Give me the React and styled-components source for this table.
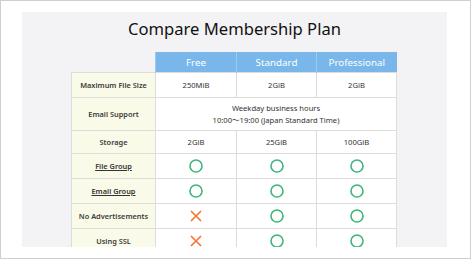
import React from 'react';
import styled, { createGlobalStyle } from 'styled-components';

const GlobalStyle = createGlobalStyle`
  body {
    margin: 0;
    background: #fff;
  }
`;

const Frame = styled.div`
  box-sizing: border-box;
  width: 471px;
  height: 259px;
  border: 1px solid #cfcfcf;
  padding: 11px 23px 11px 21px;
`;

const Panel = styled.div`
  height: 235px;
  background: #f3f3f5;
  overflow: hidden;
  padding-left: 49px;
  box-sizing: border-box;
`;

const Title = styled.h1`
  margin: 0 0 0 -49px;
  padding: 5px 0 0 0;
  height: 40px;
  box-sizing: border-box;
  text-align: center;
  font-family: 'Noto Sans', sans-serif;
  font-weight: 400;
  font-size: 16.6px;
  line-height: 24px;
  color: #111;
`;

const Table = styled.table`
  border-collapse: collapse;
  table-layout: fixed;
  width: 325px;
  font-family: 'Noto Sans', 'Noto Sans CJK JP', sans-serif;
  font-size: 7.6px;
  color: #333;
`;

const Head = styled.th`
  background: ${p => (p.$blank ? 'transparent' : '#79b7ea')};
  color: #fff;
  font-weight: 400;
  font-size: 9.8px;
  height: 20px;
  padding: 0;
  border-left: ${p => (p.$blank ? 'none' : '1px solid #9ccaf0')};
`;

const Label = styled.td`
  background: #fafae8;
  border: 1px solid #dcdcdc;
  text-align: center;
  font-weight: 600;
  font-size: 7.4px;
  color: #3a3a3a;
  height: ${p => p.$h || 24}px;
  padding: 0;
`;

const Cell = styled.td`
  background: #fff;
  border: 1px solid #dcdcdc;
  text-align: center;
  height: ${p => p.$h || 24}px;
  padding: 0;
  line-height: 12px;
`;

const Link = styled.a`
  color: #333;
  text-decoration: underline;
`;

const Mark = styled.svg`
  display: block;
  margin: 0 auto;
`;

const Yes = () => (
  <Mark width="14" height="14" viewBox="0 0 14 14">
    <circle cx="7" cy="7" r="6" fill="none" stroke="#3fb67a" strokeWidth="1.6" />
  </Mark>
);

const No = () => (
  <Mark width="12" height="12" viewBox="0 0 12 12">
    <path d="M1 1 L11 11 M11 1 L1 11" stroke="#f07a30" strokeWidth="1.7" />
  </Mark>
);

const rows = [
  { label: <Link href="#">File Group</Link>, vals: [1, 1, 1] },
  { label: <Link href="#">Email Group</Link>, vals: [1, 1, 1] },
  { label: 'No Advertisements', vals: [0, 1, 1] },
  { label: 'Using SSL', vals: [0, 1, 1] },
];

export default function App() {
  return (
    <Frame>
      <GlobalStyle />
      <Panel>
        <Title>Compare Membership Plan</Title>
        <Table>
          <colgroup>
            <col style={{ width: 84 }} />
            <col style={{ width: 81 }} />
            <col style={{ width: 80 }} />
            <col style={{ width: 80 }} />
          </colgroup>
          <thead>
            <tr>
              <Head $blank />
              <Head>Free</Head>
              <Head>Standard</Head>
              <Head>Professional</Head>
            </tr>
          </thead>
          <tbody>
            <tr>
              <Label>Maximum File Size</Label>
              <Cell>250MiB</Cell>
              <Cell>2GiB</Cell>
              <Cell>2GiB</Cell>
            </tr>
            <tr>
              <Label $h={32}>Email Support</Label>
              <Cell $h={32} colSpan={3}>
                Weekday business hours<br />10:00〜19:00 (Japan Standard Time)
              </Cell>
            </tr>
            <tr>
              <Label $h={22}>Storage</Label>
              <Cell $h={22}>2GiB</Cell>
              <Cell $h={22}>25GiB</Cell>
              <Cell $h={22}>100GiB</Cell>
            </tr>
            {rows.map((r, i) => (
              <tr key={i}>
                <Label>{r.label}</Label>
                {r.vals.map((v, j) => (
                  <Cell key={j}>{v ? <Yes /> : <No />}</Cell>
                ))}
              </tr>
            ))}
          </tbody>
        </Table>
      </Panel>
    </Frame>
  );
}
